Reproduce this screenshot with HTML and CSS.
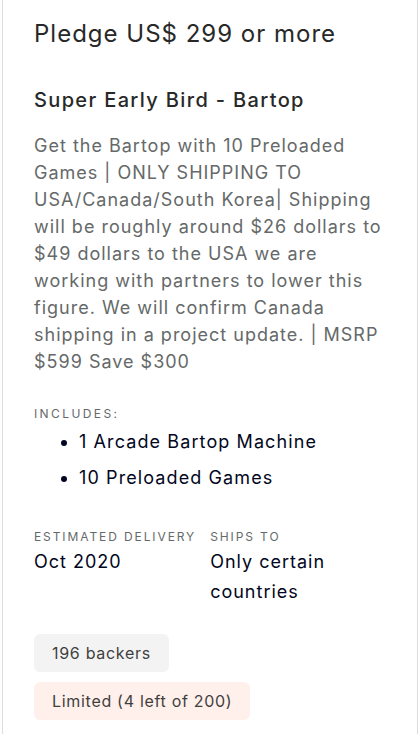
FILE: index.html
```html
<!DOCTYPE html>
<html lang="en">
<head>
    <meta charset="UTF-8">
    <meta name="viewport" content="width=device-width, initial-scale=1.0">
    <title>Pledge US$ 299 or more</title>
    <link rel="stylesheet" href="styles.css">
</head>
<body>
    <!-- Reward card -->
    <div class="reward">
        <h2 class="reward-amount">Pledge US$ 299 or more</h2>
        <h3 class="reward-title">Super Early Bird - Bartop</h3>
        <p class="reward-desc">Get the Bartop with 10 Preloaded Games | ONLY SHIPPING TO USA/Canada/South Korea| Shipping will be roughly around $26 dollars to $49 dollars to the USA we are working with partners to lower this figure. We will confirm Canada shipping in a project update. | MSRP $599 Save $300</p>

        <div class="reward-includes">
            <span class="label wide">Includes:</span>
            <ul>
                <li>1 Arcade Bartop Machine</li>
                <li>10 Preloaded Games</li>
            </ul>
        </div>

        <div class="reward-meta">
            <div class="meta-col first">
                <span class="label">Estimated delivery</span>
                <span class="value">Oct 2020</span>
            </div>
            <div class="meta-col">
                <span class="label">Ships to</span>
                <span class="value">Only certain countries</span>
            </div>
        </div>

        <div class="badges">
            <span class="badge">196 backers</span>
            <span class="badge limited">Limited (4 left of 200)</span>
        </div>
    </div>
</body>
</html>
```

FILE: styles.css
```css
/* Global styles */
body {
    margin: 0;
    padding: 0;
    font-family: Inter, "Noto Sans", sans-serif;
    background-color: #fff;
    color: #020621;
}

/* Card */
.reward {
    margin-left: 2px;
    width: 416px;
    box-sizing: border-box;
    min-height: 734px;
    padding: 16px 26px 12px 31px;
    border-left: 1px solid #dcdedd;
    border-right: 1px solid #dcdedd;
}

.reward-amount {
    margin: 0;
    font-size: 24px;
    font-weight: 400;
    line-height: 36px;
    letter-spacing: 1px;
    color: #282828;
}

.reward-title {
    margin: 33px 0 0;
    font-size: 20px;
    font-weight: 500;
    line-height: 30px;
    letter-spacing: 1.35px;
    color: #282828;
}

.reward-desc {
    margin: 17px 0 0;
    font-size: 18px;
    line-height: 27px;
    letter-spacing: 1px;
    color: #656969;
}

/* Small caps labels */
.label {
    display: block;
    font-size: 12px;
    line-height: 20px;
    letter-spacing: 1.9px;
    text-transform: uppercase;
    color: #656969;
}

.label.wide {
    letter-spacing: 2.4px;
}

.reward-includes {
    margin-top: 29px;
}

.reward-includes ul {
    margin: 0;
    padding-left: 45px;
}

.reward-includes li {
    font-size: 18px;
    line-height: 36px;
    letter-spacing: 1.1px;
}

.reward-meta {
    display: flex;
    gap: 14px;
    margin-top: 31px;
}

.meta-col.first {
    flex: none;
}

.value {
    display: block;
    font-size: 18px;
    line-height: 30px;
    letter-spacing: 1px;
}

.badges {
    display: flex;
    flex-direction: column;
    align-items: flex-start;
    gap: 10px;
    margin-top: 27px;
}

.badge {
    padding: 0 18px;
    font-size: 16px;
    line-height: 38px;
    letter-spacing: 0.7px;
    border-radius: 6px;
    background-color: #f3f3f3;
    color: #3f3f3f;
}

.badge.limited {
    background-color: #fff0eb;
}
```
